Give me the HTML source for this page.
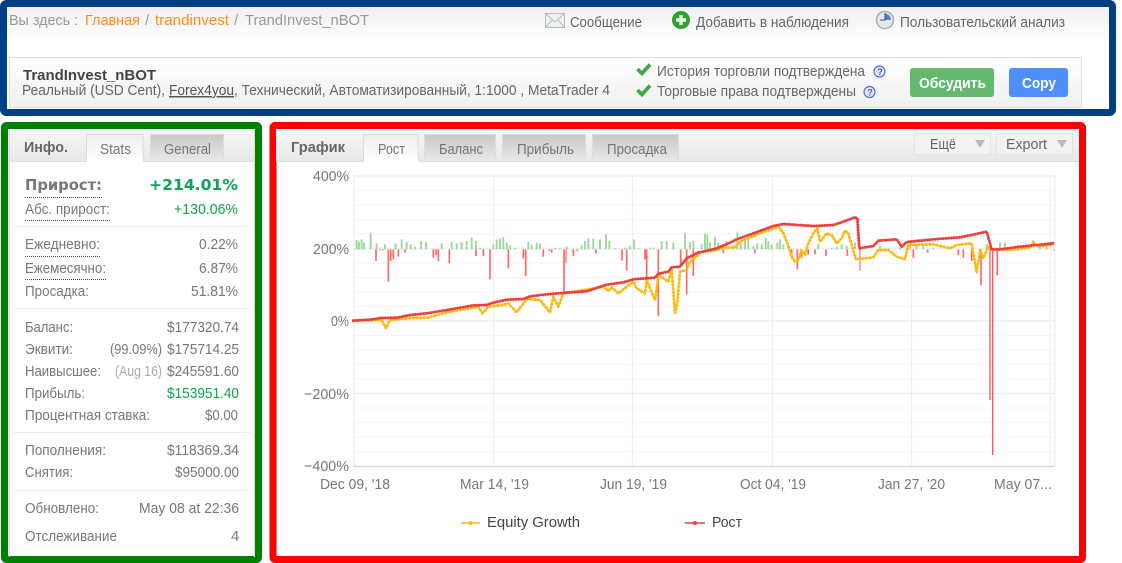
<!DOCTYPE html>
<html><head><meta charset="utf-8"><style>
html,body{margin:0;padding:0;background:#fff;width:1122px;height:563px;overflow:hidden}
svg{display:block}
text{font-family:"Liberation Sans",sans-serif;font-size:15px;fill:#777}
.d{fill:#777}.g{fill:#0aa54f}.l{fill:#999}
.b{font-weight:bold}
.v{font-family:"DejaVu Sans",sans-serif;font-weight:bold;font-size:15px}
.dot{stroke:#444;stroke-width:1;stroke-dasharray:1 1;fill:none}
.div{stroke:#eee;stroke-width:1}
</style></head><body>
<svg width="1122" height="563" viewBox="0 0 1122 563" xmlns="http://www.w3.org/2000/svg">
<defs>
<linearGradient id="top" x1="0" y1="0" x2="0" y2="1"><stop offset="0" stop-color="#efefef"/><stop offset="1" stop-color="#fff"/></linearGradient>
<linearGradient id="box" x1="0" y1="0" x2="0" y2="1"><stop offset="0" stop-color="#fff"/><stop offset="1" stop-color="#efefef"/></linearGradient>
<linearGradient id="hd" x1="0" y1="0" x2="0" y2="1"><stop offset="0" stop-color="#f6f6f6"/><stop offset="1" stop-color="#e8e8e8"/></linearGradient>
<linearGradient id="tab" x1="0" y1="0" x2="0" y2="1"><stop offset="0" stop-color="#c8c8c8"/><stop offset="1" stop-color="#e9e9e9"/></linearGradient>
<linearGradient id="act" x1="0" y1="0" x2="0" y2="1"><stop offset="0" stop-color="#eee"/><stop offset="1" stop-color="#fff"/></linearGradient>
</defs>

<!-- Top frame -->
<rect x="3.5" y="3.5" width="1109" height="109" rx="3" fill="#fff" stroke="#003f82" stroke-width="7"/>
<rect x="7" y="7" width="1102" height="34" fill="url(#top)"/>
<text x="9" y="25" class="l" textLength="69" lengthAdjust="spacingAndGlyphs">Вы здесь :</text>
<text x="85" y="25" style="fill:#ff8c1a" textLength="55" lengthAdjust="spacingAndGlyphs">Главная</text>
<text x="145" y="25" class="l">/</text>
<text x="155" y="25" style="fill:#ff8c1a" textLength="74" lengthAdjust="spacingAndGlyphs">trandinvest</text>
<text x="234" y="25" class="l">/</text>
<text x="245" y="25" class="l" textLength="124" lengthAdjust="spacingAndGlyphs">TrandInvest_nBOT</text>

<!-- mail -->
<rect x="545.5" y="13.5" width="19" height="14" fill="#eef2f2" stroke="#b5bdbd"/>
<path d="M546 14l9 8 9-8M546 27l6-7M564 27l-6-7" fill="none" stroke="#b5bdbd"/>
<text x="570" y="27" style="fill:#666" textLength="72" lengthAdjust="spacingAndGlyphs">Сообщение</text>
<!-- plus -->
<circle cx="681" cy="20" r="9" fill="#2aa52a"/>
<path d="M681 15v10M676 20h10" stroke="#e8f5e8" stroke-width="3.4"/>
<text x="696" y="27" style="fill:#666" textLength="153" lengthAdjust="spacingAndGlyphs">Добавить в наблюдения</text>
<!-- clock -->
<circle cx="885" cy="20" r="8.5" fill="#e4e8ec" stroke="#aab0b4" stroke-width="1.6"/>
<path d="M885 13.5v6.5h6a6.5 6.5 0 0 0-6-6.5z" fill="#5c7cc4"/>
<path d="M885 13v7h-5" stroke="#38508c" stroke-width="1" fill="none"/>
<text x="900" y="27" style="fill:#666" textLength="165" lengthAdjust="spacingAndGlyphs">Пользовательский анализ</text>

<!-- Info box -->
<rect x="9.5" y="57.5" width="1072" height="50" fill="url(#box)" stroke="#ddd"/>
<text x="23" y="80" class="b" style="fill:#444" textLength="133" lengthAdjust="spacingAndGlyphs">TrandInvest_nBOT</text>
<text x="22" y="95" style="fill:#666" textLength="143" lengthAdjust="spacingAndGlyphs">Реальный (USD Cent),</text>
<text x="169" y="95" style="fill:#555;text-decoration:underline" textLength="65" lengthAdjust="spacingAndGlyphs">Forex4you</text>
<text x="234" y="95" style="fill:#666" textLength="376" lengthAdjust="spacingAndGlyphs">, Технический, Автоматизированный, 1:1000 , MetaTrader 4</text>
<path d="M637.500 69l4.500 4.500 8-9" fill="none" stroke="#3fa83f" stroke-width="3.600"/>
<path d="M637.500 90l4.500 4.500 8-9" fill="none" stroke="#3fa83f" stroke-width="3.600"/>
<text x="657" y="76" style="fill:#666" textLength="208" lengthAdjust="spacingAndGlyphs">История торговли подтверждена</text>
<text x="657" y="96" style="fill:#666" textLength="199" lengthAdjust="spacingAndGlyphs">Торговые права подтверждены</text>
<circle cx="879.500" cy="71.500" r="5.500" fill="#dfe4fa" stroke="#5a70c8" stroke-width="1.200"/>
<text x="877.200" y="75" style="font-size:9px;fill:#4a5fc0;font-weight:bold">?</text>
<circle cx="869.500" cy="92" r="5.500" fill="#dfe4fa" stroke="#5a70c8" stroke-width="1.200"/>
<text x="867.200" y="95.500" style="font-size:9px;fill:#4a5fc0;font-weight:bold">?</text>
<rect x="910" y="68" width="84" height="29" rx="3" fill="#64b96f"/>
<text x="919" y="88" class="b" style="fill:#fff" textLength="67" lengthAdjust="spacingAndGlyphs">Обсудить</text>
<rect x="1009" y="68" width="59" height="29" rx="3" fill="#4f8ffb"/>
<text x="1022" y="88" class="b" style="fill:#fff" textLength="34" lengthAdjust="spacingAndGlyphs">Copy</text>

<!-- Left frame -->
<rect x="4.500" y="125.500" width="254" height="434" rx="2" fill="#fff" stroke="#008000" stroke-width="7"/>
<path d="M9.500 129v428M254.500 129v428" stroke="#ddd"/>
<rect x="10" y="129" width="244" height="32" fill="url(#hd)"/>
<path d="M10 161.500h244" stroke="#ddd"/>
<text x="24" y="152" class="b" style="fill:#666" textLength="44" lengthAdjust="spacingAndGlyphs">Инфо.</text>
<path d="M86.500 162v-27.500h56.500v27.500" fill="url(#act)" stroke="#ddd"/>
<rect x="87" y="158" width="56" height="5" fill="#fff"/>
<text x="100" y="154" class="d" textLength="31" lengthAdjust="spacingAndGlyphs">Stats</text>
<rect x="150.500" y="134.500" width="73" height="27" fill="url(#tab)" stroke="#ddd"/>
<text x="164" y="154" class="d" textLength="47" lengthAdjust="spacingAndGlyphs">General</text>

<text x="25" y="190" class="v" style="fill:#777" textLength="77" lengthAdjust="spacingAndGlyphs">Прирост:</text>
<text x="149" y="190" class="v g" textLength="89" lengthAdjust="spacingAndGlyphs">+214.01%</text>
<path class="dot" d="M25 197.500h77"/>
<text x="25" y="214" class="d" textLength="85" lengthAdjust="spacingAndGlyphs">Абс. прирост:</text>
<text x="174" y="214" class="g" textLength="64" lengthAdjust="spacingAndGlyphs">+130.06%</text>
<path class="dot" d="M25 220.500h86"/>
<path class="div" d="M12 226.500h239"/>
<text x="25" y="249" class="d" textLength="75" lengthAdjust="spacingAndGlyphs">Ежедневно:</text>
<text x="199" y="249" class="d" textLength="39" lengthAdjust="spacingAndGlyphs">0.22%</text>
<path class="dot" d="M25 256.500h75"/>
<text x="25" y="273" class="d" textLength="81" lengthAdjust="spacingAndGlyphs">Ежемесячно:</text>
<text x="199" y="273" class="d" textLength="39" lengthAdjust="spacingAndGlyphs">6.87%</text>
<path class="dot" d="M25 279.500h82"/>
<text x="25" y="296" class="d" textLength="64" lengthAdjust="spacingAndGlyphs">Просадка:</text>
<text x="191" y="296" class="d" textLength="47" lengthAdjust="spacingAndGlyphs">51.81%</text>
<path class="div" d="M12 308.500h239"/>
<text x="25" y="332" class="d" textLength="48" lengthAdjust="spacingAndGlyphs">Баланс:</text>
<text x="167" y="332" class="d" textLength="72" lengthAdjust="spacingAndGlyphs">$177320.74</text>
<text x="25" y="354" class="d" textLength="48" lengthAdjust="spacingAndGlyphs">Эквити:</text>
<text x="110" y="354" class="d" textLength="52" lengthAdjust="spacingAndGlyphs">(99.09%)</text>
<text x="167" y="354" class="d" textLength="72" lengthAdjust="spacingAndGlyphs">$175714.25</text>
<text x="25" y="376" class="d" textLength="76" lengthAdjust="spacingAndGlyphs">Наивысшее:</text>
<text x="115" y="376" style="fill:#aaa" textLength="47" lengthAdjust="spacingAndGlyphs">(Aug 16)</text>
<text x="167" y="376" class="d" textLength="72" lengthAdjust="spacingAndGlyphs">$245591.60</text>
<text x="25" y="398" class="d" textLength="60" lengthAdjust="spacingAndGlyphs">Прибыль:</text>
<text x="167" y="398" class="g" textLength="72" lengthAdjust="spacingAndGlyphs">$153951.40</text>
<text x="25" y="420" class="d" textLength="125" lengthAdjust="spacingAndGlyphs">Процентная ставка:</text>
<text x="205" y="420" class="d" textLength="33" lengthAdjust="spacingAndGlyphs">$0.00</text>
<path class="div" d="M12 432.500h239"/>
<text x="25" y="455" class="d" textLength="81" lengthAdjust="spacingAndGlyphs">Пополнения:</text>
<text x="167" y="455" class="d" textLength="72" lengthAdjust="spacingAndGlyphs">$118369.34</text>
<text x="25" y="477" class="d" textLength="48" lengthAdjust="spacingAndGlyphs">Снятия:</text>
<text x="175" y="477" class="d" textLength="64" lengthAdjust="spacingAndGlyphs">$95000.00</text>
<path class="div" d="M12 490.500h239"/>
<text x="25" y="513" class="d" textLength="74" lengthAdjust="spacingAndGlyphs">Обновлено:</text>
<text x="139" y="513" class="d" textLength="100" lengthAdjust="spacingAndGlyphs">May 08 at 22:36</text>
<text x="25" y="541" class="d" textLength="92" lengthAdjust="spacingAndGlyphs">Отслеживание</text>
<text x="231" y="541" class="d">4</text>

<!-- Right frame -->
<rect x="273" y="125.500" width="809.500" height="434" rx="2" fill="#fff" stroke="#f00" stroke-width="7"/>
<rect x="276" y="129" width="803" height="32" fill="url(#hd)"/>
<path d="M276 161.500h803" stroke="#ddd"/>
<text x="291" y="152" class="b" style="fill:#666" textLength="54" lengthAdjust="spacingAndGlyphs">График</text>
<path d="M363.500 162v-27.500h54.500v27.500" fill="url(#act)" stroke="#ddd"/>
<rect x="364" y="158" width="54" height="5" fill="#fff"/>
<text x="378" y="154" class="d" textLength="27" lengthAdjust="spacingAndGlyphs">Рост</text>
<rect x="424.500" y="134.500" width="71" height="27" fill="url(#tab)" stroke="#ddd"/>
<text x="439" y="154" class="d" textLength="44" lengthAdjust="spacingAndGlyphs">Баланс</text>
<rect x="502.500" y="134.500" width="83" height="27" fill="url(#tab)" stroke="#ddd"/>
<text x="517" y="154" class="d" textLength="57" lengthAdjust="spacingAndGlyphs">Прибыль</text>
<rect x="592.500" y="134.500" width="86" height="27" fill="url(#tab)" stroke="#ddd"/>
<text x="607" y="154" class="d" textLength="60" lengthAdjust="spacingAndGlyphs">Просадка</text>
<rect x="914.500" y="133.500" width="76" height="21" fill="#f2f2f2" stroke="#e2e2e2"/>
<text x="930" y="149" style="fill:#666" textLength="26" lengthAdjust="spacingAndGlyphs">Ещё</text>
<path d="M975 140h10l-5 8z" fill="#bbb"/>
<rect x="996.500" y="133.500" width="76" height="21" fill="#f2f2f2" stroke="#e2e2e2"/>
<text x="1006" y="149" style="fill:#666" textLength="41" lengthAdjust="spacingAndGlyphs">Export</text>
<path d="M1057 140h10l-5 8z" fill="#bbb"/>

<!-- Grid -->
<path d="M354 190.500h701M354 205h701M354 219.500h701M354 234h701M354 263h701M354 277.500h701M354 292h701M354 306.500h701M354 335.500h701M354 350h701M354 364.500h701M354 379h701M354 408h701M354 422.500h701M354 437h701M354 451.500h701" stroke="#f6f6f6"/>
<path d="M354 176h701M354 248.500h701M354 321h701M354 393.500h701" stroke="#eee" stroke-width="1.500"/>
<path d="M354 176v290M493.500 176v290M632.500 176v290M772.500 176v290M911.500 176v290M1050.500 176v290M1055 176v290" stroke="#eee" stroke-width="1.200"/>
<path d="M353 466.500h702" stroke="#cfdaea" stroke-width="1.500"/>

<text x="313" y="181" class="d" textLength="36" lengthAdjust="spacingAndGlyphs">400%</text>
<text x="313" y="254" class="d" textLength="36" lengthAdjust="spacingAndGlyphs">200%</text>
<text x="331" y="326" class="d" textLength="18" lengthAdjust="spacingAndGlyphs">0%</text>
<text x="304" y="399" class="d" textLength="45" lengthAdjust="spacingAndGlyphs">−200%</text>
<text x="304" y="471" class="d" textLength="45" lengthAdjust="spacingAndGlyphs">−400%</text>

<text x="320" y="489" class="d" textLength="70" lengthAdjust="spacingAndGlyphs">Dec 09, '18</text>
<text x="460" y="489" class="d" textLength="69" lengthAdjust="spacingAndGlyphs">Mar 14, '19</text>
<text x="600" y="489" class="d" textLength="67" lengthAdjust="spacingAndGlyphs">Jun 19, '19</text>
<text x="740" y="489" class="d" textLength="66" lengthAdjust="spacingAndGlyphs">Oct 04, '19</text>
<text x="878" y="489" class="d" textLength="67" lengthAdjust="spacingAndGlyphs">Jan 27, '20</text>
<text x="994" y="489" class="d" textLength="58" lengthAdjust="spacingAndGlyphs">May 07...</text>

<!-- Bars + lines: left part -->
<g transform="translate(340 225) scale(.33333)" fill="none">
<path stroke="#9ad69a" stroke-width="5.500" d="M50 73v-28M57 73v-22M65 73v-30M72 73v-20M92 73v-50M110 73v-18M135 73v-15M167 73v-18M185 73v-30M200 73v-22M212 73v-15M225 73v-8M243 73v-25M258 73v-22M305 73v-18M335 73v-22M350 73v-18M365 73v-22M380 73v-25M395 73v-35M408 73v-25M420 73v-5M460 73v-15M470 73v-30M480 73v-32M490 73v-37M500 73v-20M510 73v-12M525 73v-5M565 73v-22M575 73v-15M590 73v-20M600 73v-18M645 73v-4M660 73v-3M680 73v-8M725 73v-12M735 73v-25M745 73v-33M760 73v-32M780 73v-30M798 73v-45M808 73v-25M825 73v-3M855 73v-5M870 73v-10M882 73v-30M895 73v-3M930 73v-4M940 73v-5M965 73v-25M980 73v-25M1000 73v-20M1035 73v-50M1050 73v-22M1060 73v-25"/>
<path stroke="#f66" stroke-width="5" d="M108 73v35M120 73v3M128 73v3M145 73v97M152 73v35M160 73v30M175 73v22M195 73v10M280 73v25M288 73v18M295 73v35M328 73v42M408 73v20M430 73v20M450 73v90M505 73v57M550 73v27M557 73v80M610 73v22M628 73v5M635 73v10M672 73v130M700 73v20M712 73v5M768 73v12M846 73v34M860 73v63M915 73v30M920 73v85M955 73v200M1022 73v45M1040 73v135M1060 73v80"/>
<path stroke="#f99" stroke-width="5" d="M678 73v42"/>
<path stroke="#fdbb12" stroke-width="5" stroke-linejoin="round" d="M40 287L125 285L138 310L150 285L215 279L265 278L320 262L415 245L428 265L445 245L490 240L505 235L530 262L560 222L600 225L630 262L640 215L655 245L670 205L790 185L805 198L815 187L835 205L880 170L890 190L915 205L920 165L945 225L955 150L985 170L995 135L1005 265L1012 235L1020 140L1040 135L1050 110L1080 85"/>
<path stroke="#fdbb12" stroke-width="9" stroke-linecap="round" stroke-dasharray="0.1 11" d="M40 287L125 285L138 310L150 285L215 279L265 278L320 262L415 245L428 265L445 245L490 240L505 235L530 262L560 222L600 225L630 262L640 215L655 245L670 205L790 185L805 198L815 187L835 205L880 170L890 190L915 205L920 165L945 225L955 150L985 170L995 135L1005 265L1012 235L1020 140L1040 135L1050 110L1080 85"/>
<path stroke="#ee3e3e" stroke-width="5" stroke-linejoin="round" d="M40 287L100 283L120 279L170 278L210 270L260 265L320 255L400 241L440 240L460 233L500 224L550 222L570 214L620 208L680 203L740 199L800 179L850 172L880 163L945 158L955 146L985 140L995 127L1020 125L1040 100L1080 80"/>
<path stroke="#ee3e3e" stroke-width="9" stroke-linecap="round" stroke-dasharray="0.1 8" d="M40 287L100 283L120 279L170 278L210 270L260 265L320 255L400 241L440 240L460 233L500 224L550 222L570 214L620 208L680 203L740 199L800 179L850 172L880 163L945 158L955 146L985 140L995 127L1020 125L1040 100L1080 80"/>
</g>
<!-- right part -->
<g transform="translate(700 200) scale(.33333)" fill="none">
<path stroke="#9ad69a" stroke-width="5.500" d="M5 148v-15M15 148v-48M22 148v-45M30 148v-20M45 148v-38M55 148v-20M65 148v-12M80 148v-25M100 148v-12M112 148v-50M122 148v-25M135 148v-30M145 148v-40M160 148v-10M172 148v-18M185 148v-15M197 148v-35M205 148v-25M215 148v-15M232 148v-20M240 148v-30M250 148v-15M355 148v-18M395 148v-5M410 148v-8M425 148v-15M440 148v-10M465 148v-20M540 148v-10M600 148v-8M630 148v-25M650 148v-15M670 148v-15M700 148v-5M860 148v-15M900 148v-20M915 148v-20M1020 148v-10M1040 148v-10"/>
<path stroke="#f66" stroke-width="5" d="M70 148v12M165 148v12M275 148v28M292 148v60M305 148v25M325 148v15M345 148v15M378 148v20M442 148v20M640 148v25M683 148v10M775 148v18M790 148v25M815 148v35M843 148v108M892 148v78M1062 148v3"/>
<path stroke="#f99" stroke-width="5" d="M480 148v65"/>
<path stroke="#f77" stroke-width="5" d="M870 148v452"/>
<path stroke="#f55" stroke-width="4" d="M878 148v617"/>
<path stroke="#fdbb12" stroke-width="5" stroke-linejoin="round" d="M0 157L50 150L70 143L105 142L120 125L180 100L235 80L250 100L262 130L275 170L285 185L295 180L305 150L315 165L325 130L340 100L352 85L360 125L380 100L395 105L410 130L425 115L435 92L445 100L460 150L468 178L520 172L535 150L565 150L590 170L615 178L625 135L700 133L750 145L770 135L815 130L830 218L840 150L850 175L865 140L875 148L930 150L990 143L1000 127L1015 140L1060 133"/>
<path stroke="#fdbb12" stroke-width="9" stroke-linecap="round" stroke-dasharray="0.1 11" d="M0 157L50 150L70 143L105 142L120 125L180 100L235 80L250 100L262 130L275 170L285 185L295 180L305 150L315 165L325 130L340 100L352 85L360 125L380 100L395 105L410 130L425 115L435 92L445 100L460 150L468 178L520 172L535 150L565 150L590 170L615 178L625 135L700 133L750 145L770 135L815 130L830 218L840 150L850 175L865 140L875 148L930 150L990 143L1000 127L1015 140L1060 133"/>
<path stroke="#ee3e3e" stroke-width="5" stroke-linejoin="round" d="M0 157L50 145L90 128L110 118L160 100L220 78L250 72L280 74L340 78L400 75L430 65L465 52L472 55L478 145L520 138L535 122L590 118L605 140L620 126L700 118L780 112L860 95L875 148L900 148L960 140L1060 130"/>
<path stroke="#ee3e3e" stroke-width="9" stroke-linecap="round" stroke-dasharray="0.1 8" d="M0 157L50 145L90 128L110 118L160 100L220 78L250 72L280 74L340 78L400 75L430 65L465 52L472 55L478 145L520 138L535 122L590 118L605 140L620 126L700 118L780 112L860 95L875 148L900 148L960 140L1060 130"/>
</g>

<!-- Legend -->
<path d="M461 523h19" stroke="#fdbb12" stroke-width="1.500"/><circle cx="470.500" cy="523" r="2" fill="#fdbb12"/>
<text x="487" y="527" style="fill:#444" textLength="93" lengthAdjust="spacingAndGlyphs">Equity Growth</text>
<path d="M685 523h20" stroke="#ee3e3e" stroke-width="1.500"/><circle cx="695" cy="523" r="2" fill="#ee3e3e"/>
<text x="712" y="527" style="fill:#444" textLength="30" lengthAdjust="spacingAndGlyphs">Рост</text>
</svg>
</body></html>
